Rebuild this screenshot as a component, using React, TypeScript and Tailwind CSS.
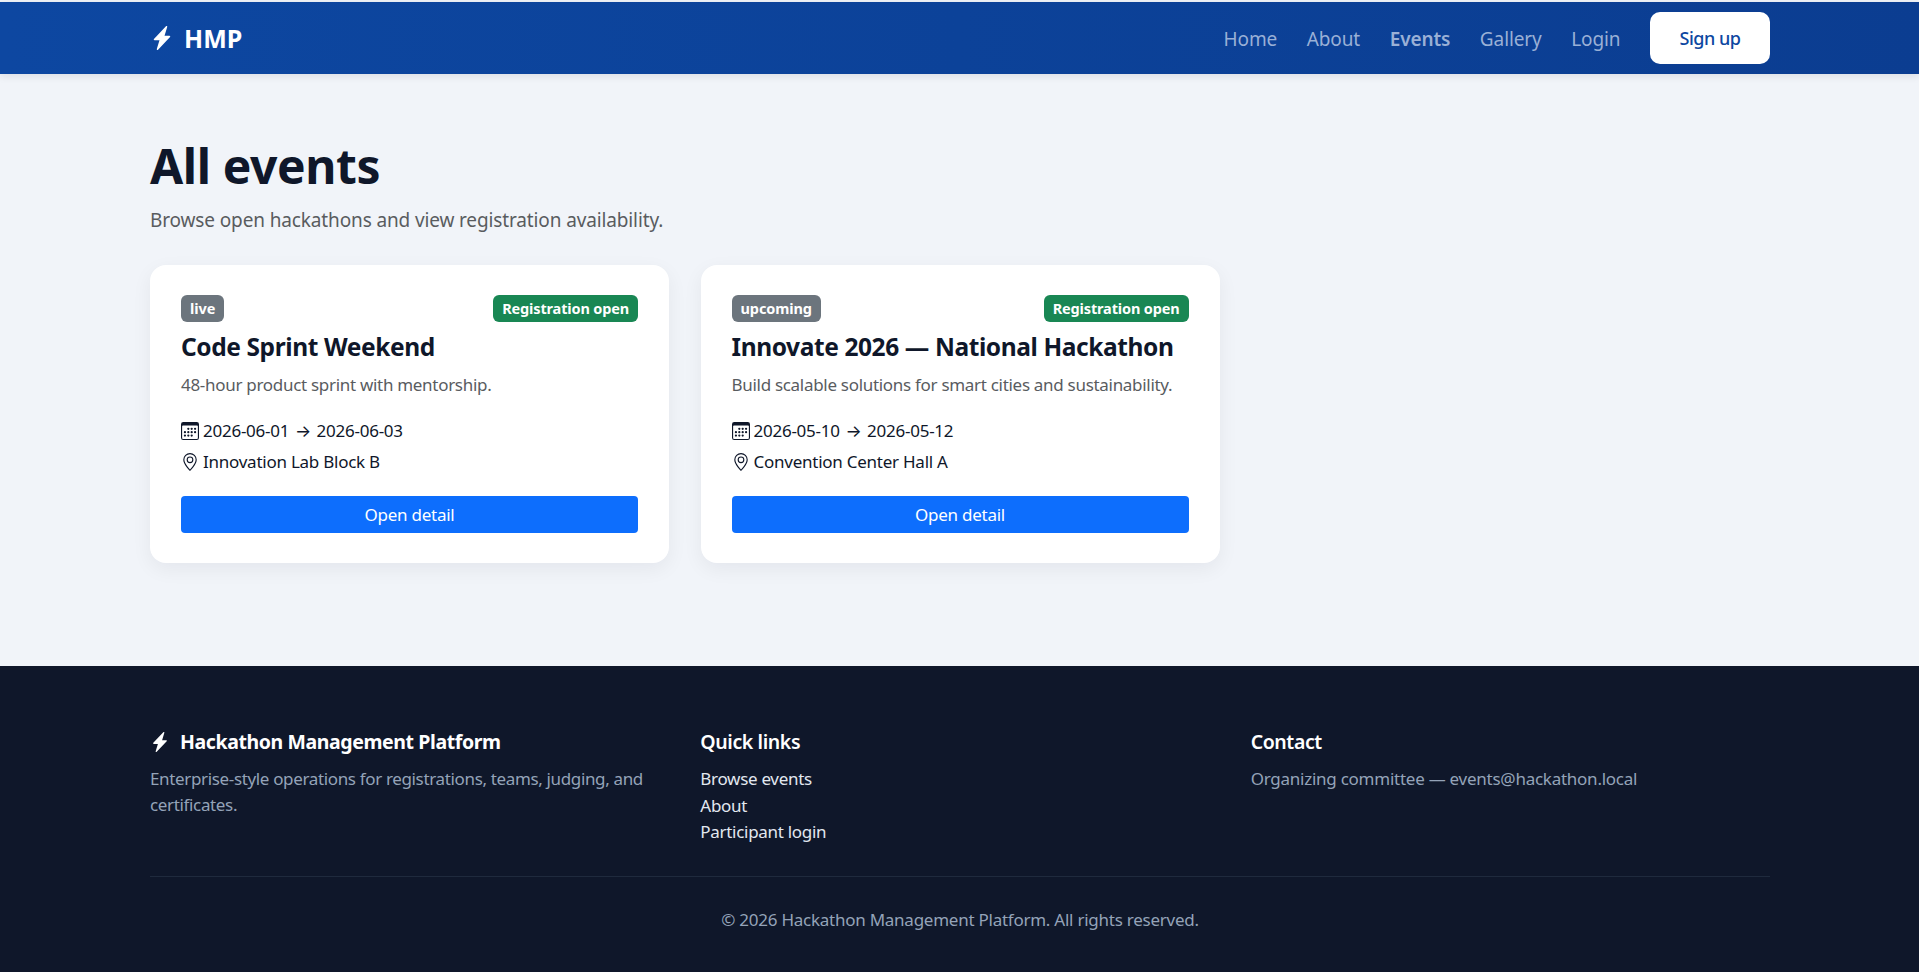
import React from 'react';
import { BsLightningChargeFill, BsCalendar3, BsGeoAlt } from 'react-icons/bs';

const events = [
  {
    status: 'live',
    title: 'Code Sprint Weekend',
    desc: '48-hour product sprint with mentorship.',
    from: '2026-06-01',
    to: '2026-06-03',
    place: 'Innovation Lab Block B',
  },
  {
    status: 'upcoming',
    title: 'Innovate 2026 — National Hackathon',
    desc: 'Build scalable solutions for smart cities and sustainability.',
    from: '2026-05-10',
    to: '2026-05-12',
    place: 'Convention Center Hall A',
  },
];

const navLinks = ['Home', 'About', 'Events', 'Gallery', 'Login'];
const quickLinks = ['Browse events', 'About', 'Participant login'];

const App: React.FC = () => {
  return (
    <div className="min-h-[972px] flex flex-col bg-[#f1f4f9] pt-[2px] font-['Noto_Sans',sans-serif] text-[17px] tracking-[-0.25px] text-[#0f172a]">
      {/* Navbar */}
      <header className="h-[72px] bg-gradient-to-r from-[#0d47a1] to-[#0b3d91] shadow-[0_2px_8px_rgba(15,23,42,0.1)] pl-[150px] pr-[149px] flex items-center justify-between">
        <div className="flex items-center gap-[10px] text-white font-bold text-[25px] tracking-[0px]">
          <BsLightningChargeFill className="w-[24px] h-[24px]" />
          <span className="mt-[2px]">HMP</span>
        </div>
        <nav className="flex items-center">
          {navLinks.map((link) => (
            <a
              key={link}
              className={`mt-[2px] mr-[29.5px] text-[19px] tracking-[-0.1px] text-[#9ab0d6] ${link === 'Events' ? 'font-semibold' : ''}`}
            >
              {link}
            </a>
          ))}
          <button className="w-[120px] h-[52px] bg-white rounded-[10px] text-[#0d47a1] text-[18px] tracking-[-0.5px] font-medium">
            Sign up
          </button>
        </nav>
      </header>

      {/* Page */}
      <main className="flex-1 pl-[150px] pr-[149px] pt-[63px]">
        <h1 className="text-[48px] leading-[58px] font-bold tracking-[-0.4px]">All events</h1>
        <p className="mt-[12px] text-[#595c5f] text-[19px] tracking-[-0.13px] leading-[27px]">
          Browse open hackathons and view registration availability.
        </p>

        <div className="mt-[31px] flex gap-[31.5px]">
          {events.map((ev) => (
            <article
              key={ev.title}
              className="w-[519px] h-[298px] bg-white rounded-[16px] shadow-[0_6px_20px_rgba(15,23,42,0.06)] p-[31px] pt-[30px]"
            >
              <div className="flex items-center justify-between">
                <span className="h-[27px] px-[9px] flex items-center bg-[#6c757d] rounded-[6px] text-white text-[14.5px] tracking-[-0.1px] font-bold">
                  {ev.status}
                </span>
                <span className="h-[27px] px-[9px] flex items-center bg-[#198754] rounded-[6px] text-white text-[14.5px] tracking-[-0.15px] font-bold">
                  Registration open
                </span>
              </div>
              <h2 className="mt-[9px] text-[24.5px] leading-[32px] tracking-[-0.4px] font-bold">{ev.title}</h2>
              <p className="mt-[8px] text-[#595c5f] leading-[27px] tracking-[-0.3px]">{ev.desc}</p>
              <div className="mt-[19px] flex items-center gap-[4px] leading-[27px]">
                <BsCalendar3 className="w-[18px] h-[18px]" />
                <span>
                  {ev.from} <span className="mx-[1.5px] font-['Inter',sans-serif]">→</span> {ev.to}
                </span>
              </div>
              <div className="mt-[3px] flex items-center gap-[4px] leading-[27px]">
                <BsGeoAlt className="w-[18px] h-[18px]" />
                <span>{ev.place}</span>
              </div>
              <button className="mt-[21px] w-full h-[37px] bg-[#0d6efd] rounded-[4px] text-white">
                Open detail
              </button>
            </article>
          ))}
        </div>
      </main>

      {/* Footer */}
      <footer className="h-[306px] bg-[#0f172a] pl-[150px] pr-[149px] pt-[61px]">
        <div className="grid grid-cols-3 gap-[31px]">
          <div>
            <div className="flex items-center gap-[10px] text-white font-bold text-[19.5px] tracking-[-0.4px]">
              <BsLightningChargeFill className="w-[20px] h-[20px]" />
              <span>Hackathon Management Platform</span>
            </div>
            <p className="mt-[10px] text-[#94a3b8] leading-[26px] tracking-[-0.35px]">
              Enterprise-style operations for registrations, teams, judging, and certificates.
            </p>
          </div>
          <div>
            <div className="text-white font-semibold text-[19.5px] tracking-[-0.4px]">Quick links</div>
            <ul className="mt-[10px] text-[#e2e8f0] leading-[26.5px] tracking-[-0.3px]">
              {quickLinks.map((l) => (
                <li key={l}>{l}</li>
              ))}
            </ul>
          </div>
          <div>
            <div className="text-white font-semibold text-[19.5px] tracking-[-0.4px]">Contact</div>
            <p className="mt-[10px] text-[#94a3b8] leading-[26px]">
              Organizing committee — events@hackathon.local
            </p>
          </div>
        </div>
        <div className="mt-[30px] pt-[29px] border-t border-[#1f2a3d] text-center text-[#94a3b8] leading-[27px]">
          © 2026 Hackathon Management Platform. All rights reserved.
        </div>
      </footer>
    </div>
  );
};

export default App;
